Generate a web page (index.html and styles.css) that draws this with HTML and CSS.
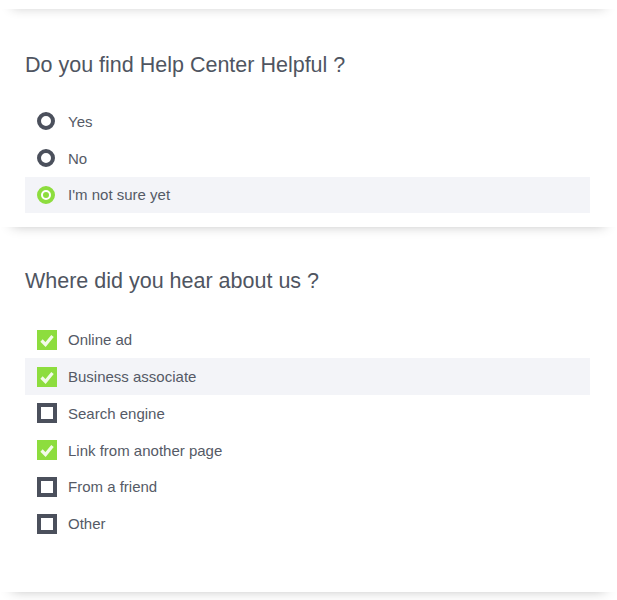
FILE: index.html
```html
<!DOCTYPE html>
<html>
<head>
<meta charset="utf-8">
<link rel="stylesheet" href="styles.css">
</head>
<body>
<div class="card card--prev"></div>

<section class="card card--rating">
  <h2 class="question">Do you find Help Center Helpful ?</h2>
  <ul class="options">
    <li class="option">
      <span class="icon"><span class="radio"></span></span>
      <span class="label">Yes</span>
    </li>
    <li class="option">
      <span class="icon"><span class="radio"></span></span>
      <span class="label">No</span>
    </li>
    <li class="option option--active">
      <span class="icon"><span class="radio radio--on"><span class="dot"></span></span></span>
      <span class="label">I'm not sure yet</span>
    </li>
  </ul>
</section>

<section class="card card--source">
  <h2 class="question">Where did you hear about us ?</h2>
  <ul class="options">
    <li class="option">
      <span class="icon"><svg class="check" viewBox="0 0 20 20"><rect width="20" height="20" fill="#8ddd3e"/><path d="M4.5 10.5 L8.5 14.5 L15.5 6" fill="none" stroke="#f2fbe9" stroke-width="3.2"/></svg></span>
      <span class="label">Online ad</span>
    </li>
    <li class="option option--active">
      <span class="icon"><svg class="check" viewBox="0 0 20 20"><rect width="20" height="20" fill="#8ddd3e"/><path d="M4.5 10.5 L8.5 14.5 L15.5 6" fill="none" stroke="#f2fbe9" stroke-width="3.2"/></svg></span>
      <span class="label">Business associate</span>
    </li>
    <li class="option">
      <span class="icon"><span class="box"></span></span>
      <span class="label">Search engine</span>
    </li>
    <li class="option">
      <span class="icon"><svg class="check" viewBox="0 0 20 20"><rect width="20" height="20" fill="#8ddd3e"/><path d="M4.5 10.5 L8.5 14.5 L15.5 6" fill="none" stroke="#f2fbe9" stroke-width="3.2"/></svg></span>
      <span class="label">Link from another page</span>
    </li>
    <li class="option">
      <span class="icon"><span class="box"></span></span>
      <span class="label">From a friend</span>
    </li>
    <li class="option">
      <span class="icon"><span class="box"></span></span>
      <span class="label">Other</span>
    </li>
  </ul>
</section>

<div class="card card--next"></div>
</body>
</html>
```

FILE: styles.css
```css
html, body {
  margin: 0;
  padding: 0;
  background: #ffffff;
}

body {
  font-family: "Liberation Sans", Arial, sans-serif;
  color: #555a66;
  overflow: hidden;
}

.card {
  background: #ffffff;
  padding: 0 27px 0 25px;
  box-shadow: 0 10px 12px -12px rgba(0, 0, 0, 0.3);
  position: relative;
}

.card--prev {
  height: 30px;
  margin-top: -21px;
  z-index: 3;
}

.card--rating {
  padding-top: 44px;
  padding-bottom: 14px;
  z-index: 2;
}

.card--source {
  padding-top: 42px;
  padding-bottom: 50px;
  z-index: 1;
}

.card--next {
  height: 9px;
  box-shadow: none;
}

.question {
  margin: 0;
  font-size: 21.5px;
  font-weight: normal;
  line-height: 24px;
  color: #4f5561;
}

.card--rating .options {
  margin-top: 26px;
}

.card--source .options {
  margin-top: 28px;
}

.options {
  list-style: none;
  margin: 0;
  padding: 0;
}

.option {
  display: flex;
  align-items: center;
  height: 36.8px;
  padding-left: 12px;
  gap: 11px;
}

.option--active {
  background: #f3f4f8;
}

.icon {
  width: 20px;
  height: 20px;
  display: flex;
  align-items: center;
  justify-content: flex-start;
  flex: none;
}

.radio {
  box-sizing: border-box;
  width: 18px;
  height: 18px;
  border-radius: 50%;
  border: 4px solid #4b505c;
  background: #fff;
  display: flex;
  align-items: center;
  justify-content: center;
}

.radio--on {
  border-color: #8ddd3e;
}

.dot {
  width: 6px;
  height: 6px;
  border-radius: 50%;
  background: #8ddd3e;
}

.box {
  box-sizing: border-box;
  width: 20px;
  height: 20px;
  border: 4px solid #4b505c;
  background: #fff;
}

.check {
  width: 20px;
  height: 20px;
  display: block;
}

.label {
  font-size: 15px;
  line-height: 17px;
  color: #555a66;
}
```
